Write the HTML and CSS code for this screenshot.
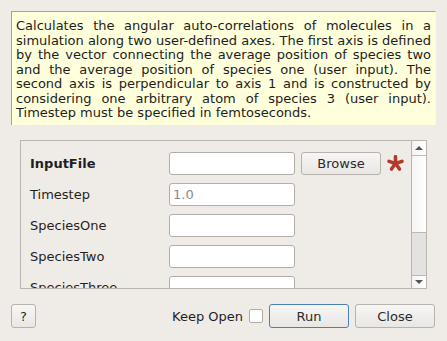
FILE: index.html
```html
<html>
<head>
  <meta charset="UTF-8" />
  <title>Angular auto-correlation</title>
  <link rel="stylesheet" href="styles.css">
</head>
<body>
  <div class="dialog">
    <div class="desc">
      <span class="line">Calculates the angular auto-correlations of molecules in a</span>
      <span class="line">simulation along two user-defined axes. The first axis is defined</span>
      <span class="line">by the vector connecting the average position of species two</span>
      <span class="line">and the average position of species one (user input). The</span>
      <span class="line">second axis is perpendicular to axis 1 and is constructed by</span>
      <span class="line">considering one arbitrary atom of species 3 (user input).</span>
      <span class="line line-last">Timestep must be specified in femtoseconds.</span>
    </div>

    <div class="params">
      <div class="rows">
        <div class="row">
          <span class="label label-bold">InputFile</span>
          <input class="field" type="text">
          <button class="btn btn-browse">Browse</button>
          <svg class="required" width="17" height="17" viewBox="0 0 20 20">
            <g stroke="#b5392b" stroke-width="4.2" stroke-linecap="round">
              <line x1="10" y1="10" x2="10" y2="2"/>
              <line x1="10" y1="10" x2="17.6" y2="7.5"/>
              <line x1="10" y1="10" x2="14.7" y2="16.5"/>
              <line x1="10" y1="10" x2="5.3" y2="16.5"/>
              <line x1="10" y1="10" x2="2.4" y2="7.5"/>
            </g>
          </svg>
        </div>
        <div class="row">
          <span class="label">Timestep</span>
          <input class="field" type="text" placeholder="1.0">
        </div>
        <div class="row">
          <span class="label">SpeciesOne</span>
          <input class="field" type="text">
        </div>
        <div class="row">
          <span class="label">SpeciesTwo</span>
          <input class="field" type="text">
        </div>
        <div class="row">
          <span class="label">SpeciesThree</span>
          <input class="field" type="text">
        </div>
      </div>
      <div class="scrollbar">
        <div class="sb-btn"><span class="arrow-up"></span></div>
        <div class="sb-slider"></div>
        <div class="sb-groove"></div>
        <div class="sb-btn sb-btn-down"><span class="arrow-down"></span></div>
      </div>
    </div>

    <div class="footer">
      <button class="btn btn-help">?</button>
      <div class="spacer"></div>
      <span class="keep-label">Keep Open</span>
      <span class="checkbox"></span>
      <button class="btn btn-run">Run</button>
      <button class="btn btn-close">Close</button>
    </div>
  </div>
</body>
</html>
```

FILE: styles.css
```css
body {
  margin: 0;
  background-color: #efebe7;
  font-family: 'DejaVu Sans', sans-serif;
  color: #2e3436;
}

.dialog {
  width: 447px;
  height: 341px;
  overflow: hidden;
}

.desc {
  margin: 11px 11px 0 11px;
  height: 106px;
  padding: 7px 4px 0 4px;
  background: #ffffdc;
  border-top: 1px solid #a6a19b;
  border-left: 1px solid #a6a19b;
  border-right: 1px solid #f7f6f5;
  font-size: 13px;
  line-height: 14.5px;
  color: #1d1d1d;
}

.line {
  display: block;
  text-align: justify;
  text-align-last: justify;
  white-space: nowrap;
}

.line-last {
  text-align-last: left;
}

.params {
  margin: 15px 0 0 20px;
  width: 405px;
  height: 147px;
  border: 1px solid #b9b4ae;
  display: flex;
  overflow: hidden;
}

.rows {
  flex: 1;
  padding: 11px 0 0 9px;
  display: flex;
  flex-direction: column;
  gap: 8px;
}

.row {
  display: flex;
  align-items: center;
  height: 23px;
  flex-shrink: 0;
}

.label {
  width: 139px;
  font-size: 13px;
  color: #1f1f1f;
}

.label-bold {
  font-weight: bold;
}

.field {
  width: 126px;
  height: 23px;
  box-sizing: border-box;
  border: 1px solid #b3aea8;
  border-radius: 3px;
  background: #fff;
  padding: 0 3px;
  font-family: 'DejaVu Sans', sans-serif;
  font-size: 13px;
  margin: 0;
}

.field::placeholder {
  color: #8a8a8a;
}

.btn {
  font-family: 'DejaVu Sans', sans-serif;
  font-size: 13px;
  color: #2a2a2a;
  background: linear-gradient(#f7f6f5, #e9e7e4);
  border: 1px solid #b7b2ac;
  border-radius: 3px;
  height: 24px;
  padding: 0;
  margin: 0;
}

.btn-browse {
  width: 80px;
  height: 23px;
  margin-left: 6px;
}

.required {
  margin-left: 6px;
}

.scrollbar {
  width: 14px;
  border-left: 1px solid #b9b4ae;
  display: flex;
  flex-direction: column;
}

.sb-btn {
  height: 14px;
  border-bottom: 1px solid #bdb8b2;
  background: linear-gradient(to right, #f4f3f2, #ffffff);
  display: flex;
  justify-content: center;
  align-items: center;
}

.sb-btn-down {
  border-bottom: none;
  border-top: 1px solid #bdb8b2;
  height: 12px;
}

.arrow-up {
  width: 0;
  height: 0;
  border-left: 4px solid transparent;
  border-right: 4px solid transparent;
  border-bottom: 4px solid #555;
}

.arrow-down {
  width: 0;
  height: 0;
  border-left: 4px solid transparent;
  border-right: 4px solid transparent;
  border-top: 4px solid #555;
}

.sb-slider {
  height: 76px;
  background: linear-gradient(to right, #f5f4f3, #ffffff);
  border-bottom: 1px solid #bdb8b2;
}

.sb-groove {
  flex: 1;
  background: #e3e2e0;
}

.footer {
  display: flex;
  align-items: center;
  margin-top: 15px;
  padding: 0 12px 0 11px;
}

.btn-help {
  width: 25px;
}

.spacer {
  flex: 1;
}

.keep-label {
  font-size: 13px;
  color: #1f1f1f;
}

.checkbox {
  width: 12px;
  height: 12px;
  border: 1px solid #b3aea8;
  border-radius: 2px;
  background: #fff;
  margin-left: 6px;
}

.btn-run {
  width: 80px;
  margin-left: 6px;
  border-color: #4a7fb5;
}

.btn-close {
  width: 80px;
  margin-left: 6px;
}
```
